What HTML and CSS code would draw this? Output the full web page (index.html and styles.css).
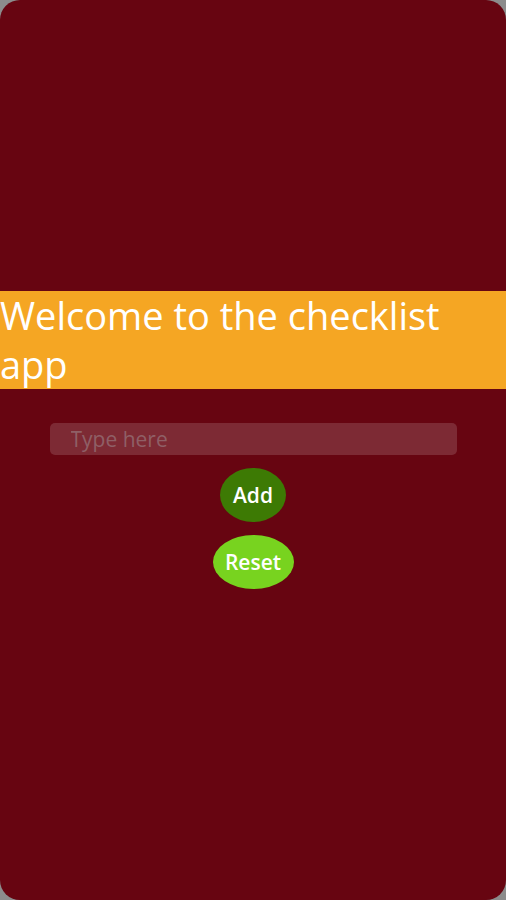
FILE: index.html
```html
<!DOCTYPE html>
<html lang="en">
<head>
  <meta charset="UTF-8" />
  <meta name="viewport" content="width=device-width, initial-scale=1.0" />
  <title>Checklist</title>
  <link rel="stylesheet" href="styles.css">
</head>
<body>
  <div class="app">
    <h1 class="title">Welcome to the checklist app</h1>

    <input type="text" class="item-input" placeholder="Type here" />

    <button class="btn btn-add">Add</button>
    <button class="btn btn-reset">Reset</button>
  </div>
</body>
</html>
```

FILE: styles.css
```css
body {
  margin: 0;
  background-color: #8c8c8c;
  font-family: 'Open Sans', sans-serif;
}

.app {
  height: 900px;
  box-sizing: border-box;
  padding-top: 291px;
  background-color: #670511;
  border-radius: 20px;
  display: flex;
  flex-direction: column;
  align-items: center;
}

.title {
  align-self: stretch;
  margin: 0;
  background-color: #f5a623;
  color: #fff;
  font-size: 38px;
  font-weight: 400;
  line-height: 49px;
}

.item-input {
  margin-top: 34px;
  width: 407px;
  height: 32px;
  box-sizing: border-box;
  padding: 0 0 0 21px;
  border: none;
  border-radius: 5px;
  background-color: rgba(255, 255, 255, 0.15);
  color: #fff;
  font-family: inherit;
  font-size: 21px;
  outline: none;
}

.item-input::placeholder {
  color: #8f5f66;
}

.btn {
  margin-top: 13px;
  height: 54px;
  border: none;
  border-radius: 50%;
  color: #fff;
  font-family: inherit;
  font-size: 21px;
  font-weight: 600;
  cursor: pointer;
  padding: 0;
}

.btn-add {
  width: 66px;
  background-color: #3d7a04;
}

.btn-reset {
  width: 81px;
  background-color: #78d31f;
}
```
